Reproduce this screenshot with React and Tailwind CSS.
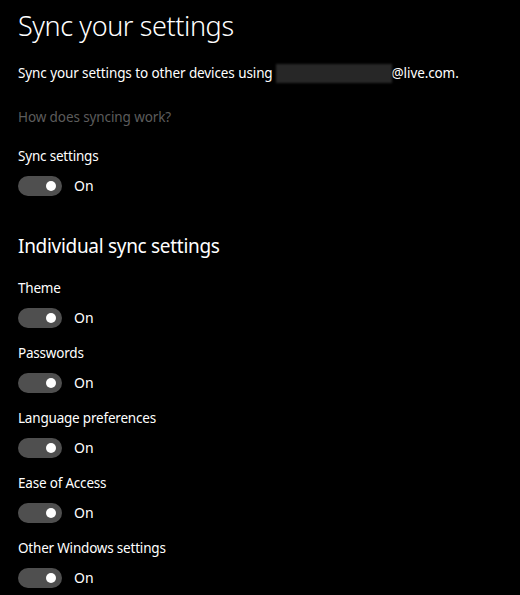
import React from 'react'

const items = ['Theme', 'Passwords', 'Language preferences', 'Ease of Access', 'Other Windows settings']

function Toggle() {
  return (
    <div className="flex items-center gap-3">
      <div className="w-[44px] h-[20px] rounded-full bg-[#4f4f4f] flex items-center justify-end pr-[6px]">
        <div className="w-[10px] h-[10px] rounded-full bg-white" />
      </div>
      <span className="text-[14px] leading-[20px] text-white">On</span>
    </div>
  )
}

function Setting({ label }) {
  return (
    <div className="flex flex-col gap-[10px]">
      <div className="text-[13.5px] tracking-[-0.2px] leading-[20px] text-white">{label}</div>
      <Toggle />
    </div>
  )
}

export default function App() {
  return (
    <div
      className="w-[520px] h-[595px] bg-black text-white px-[18px] overflow-hidden"
      style={{ fontFamily: '"Segoe UI", "Noto Sans", sans-serif' }}
    >
      <h1 className="text-[27px] tracking-[-0.4px] font-light leading-[36px] pt-[8px]">Sync your settings</h1>
      <p className="mt-[19px] text-[13.5px] tracking-[-0.1px] leading-[20px] flex items-center">
        Sync your settings to other devices using
        <span className="inline-block w-[116px] h-[19px] ml-[3px] bg-[#272727] blur-[1px]" />
        @live.com.
      </p>
      <div className="mt-[24px] text-[13.5px] tracking-[-0.1px] leading-[20px] text-[#5c5c5c]">How does syncing work?</div>
      <div className="mt-[19px]">
        <Setting label="Sync settings" />
      </div>
      <h2 className="mt-[36px] text-[19px] tracking-[-0.3px] leading-[28px]">Individual sync settings</h2>
      <div className="mt-[18px] flex flex-col gap-[15px]">
        {items.map(i => (
          <Setting key={i} label={i} />
        ))}
      </div>
    </div>
  )
}
